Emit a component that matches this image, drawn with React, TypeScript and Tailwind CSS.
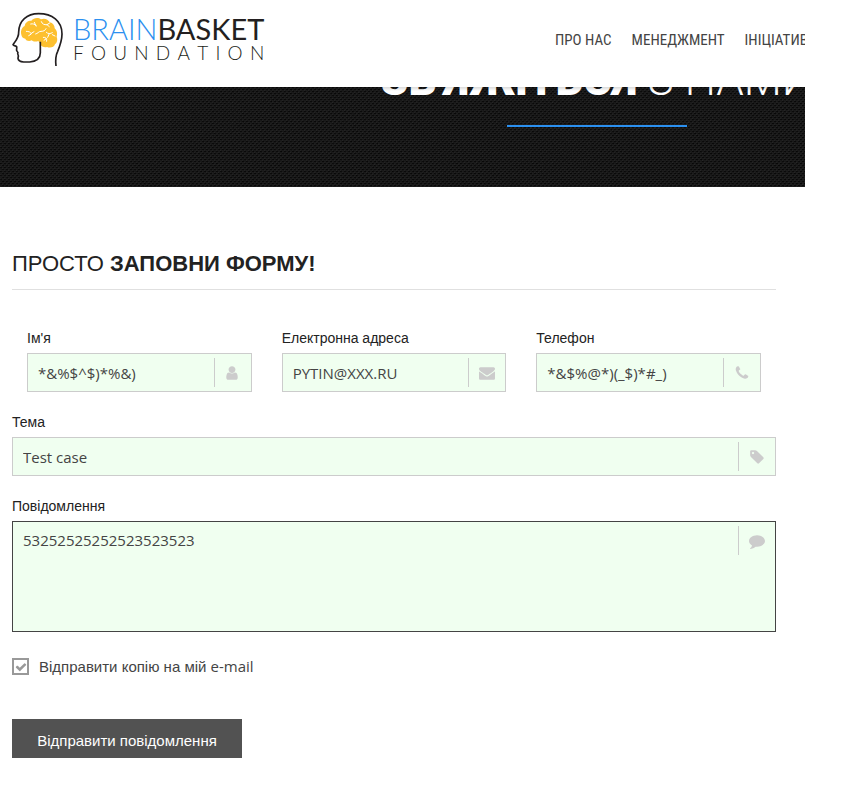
import { useState } from 'react';
import type { ReactNode } from 'react';
import clsx from 'clsx';

const icons = {
  user: 'M1536 1399q0 109-62.5 187t-150.5 78h-854q-88 0-150.5-78t-62.5-187q0-85 8.5-160.5t31.5-152 58.5-131 94-89 134.5-34.5q131 128 313 128t313-128q76 0 134.5 34.5t94 89 58.5 131 31.5 152 8.5 160.5zm-256-887q0 159-112.5 271.5t-271.5 112.5-271.5-112.5-112.5-271.5 112.5-271.5 271.5-112.5 271.5 112.5 112.5 271.5z',
  envelope:
    'M1792 710v794q0 66-47 113t-113 47h-1472q-66 0-113-47t-47-113v-794q44 49 101 87 362 246 497 345 57 42 92.5 65.5t94.5 48 110 24.5h2q51 0 110-24.5t94.5-48 92.5-65.5q170-123 498-345 57-39 100-87zm0-294q0 79-49 151t-122 123q-376 261-468 325-10 7-42.5 31t-54 38.5-52 32.5-57.5 27-50 9h-2q-23 0-50-9t-57.5-27-52-32.5-54-38.5-42.5-31q-91-64-262-182.5t-205-142.5q-62-42-117-115.5t-55-136.5q0-78 41.5-130t118.5-52h1472q65 0 112.5 47t47.5 113z',
  phone:
    'M1600 1240q0 27-10 70.5t-21 68.5q-21 50-122 106-94 51-186 51-27 0-53-3.5t-57.5-12.5-47-14.5-55.5-20.5-49-18q-98-35-175-83-127-79-264-216t-216-264q-48-77-83-175-3-9-18-49t-20.5-55.5-14.5-47-12.5-57.5-3.5-53q0-92 51-186 56-101 106-122 25-11 68.5-21t70.5-10q14 0 21 3 18 6 53 76 11 19 30 54t35 63.5 31 53.5q3 4 17.5 25t21.5 35.5 7 28.5q0 20-28.5 50t-62 55-62 53-28.5 46q0 9 5 22.5t8.5 20.5 14 24 11.5 19q76 137 174 235t235 174q2 1 19 11.5t24 14 20.5 8.5 22.5 5q18 0 46-28.5t53-62 55-62 50-28.5q14 0 28.5 7t35.5 21.5 25 17.5q25 15 53.5 31t63.5 35 54 30q70 35 76 53 3 7 3 21z',
  tag: 'M576 448q0-53-37.5-90.5t-90.5-37.5-90.5 37.5-37.5 90.5 37.5 90.5 90.5 37.5 90.5-37.5 37.5-90.5zm1067 576q0 53-37 90l-491 492q-39 37-91 37-53 0-90-37l-715-716q-38-37-64.5-101t-26.5-117v-416q0-52 38-90t90-38h416q53 0 117 26.5t102 64.5l715 714q37 39 37 91z',
  comment:
    'M1792 896q0 174-120 321.5t-326 233-450 85.5q-70 0-145-8-198 175-460 242-49 14-114 22-17 2-30.5-9t-17.5-29v-1q-3-4-.5-12t2-10 4.5-9.5l6-9 7-8.5 8-9q7-8 31-34.5t34.5-38 31-39.5 32.5-51 27-59 26-76q-157-89-247.5-220t-90.5-281q0-130 71-248.5t191-204.5 286-136.5 348-50.5q244 0 450 85.5t326 233 120 321.5z',
  check:
    'M1671 566q0 40-28 68l-724 724-136 136q-28 28-68 28t-68-28l-136-136-362-362q-28-28-28-68t28-68l136-136q28-28 68-28t68 28l294 295 656-657q28-28 68-28t68 28l136 136q28 28 28 68z',
};

type IconName = keyof typeof icons;

function Icon({ name, className }: { name: IconName; className?: string }) {
  return (
    <svg viewBox="0 0 1792 1792" fill="currentColor" aria-hidden="true" className={className}>
      <path d={icons[name]} />
    </svg>
  );
}

function Logo() {
  return (
    <a href="#home" className="flex w-fit items-start gap-[9px]" aria-label="BrainBasket Foundation">
      <svg viewBox="36 36 156 165" fill="none" className="h-[55px] w-[52px]" aria-hidden="true">
        {/* Brain */}
        <path
          d="M64 104c-3-12 2-22 10-26 1-11 11-17 20-16 7-9 21-10 29-4 10-5 22 0 26 9 10 2 15 9 15 18 7 6 9 16 6 25 4 9 1 18-5 23-3 9-14 12-24 8-8 2-17-1-20-9l-6-9c-8 3-16 2-20-2-8 4-17 1-19-5-7-1-11-6-12-12z"
          fill="#fdc02f"
        />
        <path
          d="M92 72c7-2 13 1 17 5M103 67l5 11M124 65c2 7 9 10 17 9l7 6M141 74l8-5M79 94c7 0 13 2 15 8l-8 5M94 100l8-5M107 102c7-1 8-8 16-8s12-2 15-8M139 97c5 5 12 5 18 1M148 101l-5 11M130 112c7-1 12 4 10 12M132 121l7-5M157 104l8 4"
          stroke="#fff"
          strokeWidth="3"
          strokeLinecap="round"
        />
        {/* Head outline */}
        <path
          d="M168 198c-2-18-2-30 5-44 7-17 13-32 13-52 0-39-30-61-70-61-36 0-59 21-60 55 1 17-9 27-17 38 2 4 9 3 11 6 1 5-1 8 0 12 3 3 6 5 3 9 3 5 3 8 1 14 1 9 8 10 17 11h18c20-2 32-10 32-28v-33"
          stroke="#231f20"
          strokeWidth="5"
          strokeLinejoin="round"
        />
      </svg>
      <span className="flex flex-col pt-[2px] font-['Lato',sans-serif] text-[#231f20]">
        <span className="text-[29px] leading-[29px] font-light text-[#2b90f0]">
          BRAIN<span className="font-normal text-[#231f20]">BASKET</span>
        </span>
        <span className="flex justify-between text-[19px] leading-[20px] font-light">
          {'FOUNDATION'.split('').map((letter, i) => (
            <span key={i}>{letter}</span>
          ))}
        </span>
      </span>
    </a>
  );
}

const navItems = ['Про нас', 'Менеджмент', 'Ініціативи'];

function Header() {
  return (
    <header className="flex h-[87px] overflow-hidden bg-white pt-3 pl-3">
      <div className="w-[543px] shrink-0">
        <Logo />
      </div>
      <nav className="flex gap-5 pt-[18px] font-['Roboto_Condensed','Liberation_Sans_Narrow','Roboto',sans-serif] text-[15px] leading-5 whitespace-nowrap text-[#444] uppercase">
        {navItems.map((item) => (
          <a key={item} href="#nav">
            {item}
          </a>
        ))}
      </nav>
    </header>
  );
}

function Hero() {
  return (
    <section className="relative flex h-[100px] overflow-hidden bg-[#121212]">
      {/* Woven fabric texture */}
      <svg className="absolute inset-0 h-full w-full" aria-hidden="true">
        <defs>
          <pattern id="weave" width="4" height="4" patternUnits="userSpaceOnUse">
            <rect width="4" height="4" fill="#131313" />
            <path d="M0 0h2v1H0zM2 2h2v1H2z" fill="#030303" />
            <path d="M2 1h1v1H2zM0 3h1v1H0z" fill="#1c1c1c" />
          </pattern>
          <filter id="grain">
            <feTurbulence type="fractalNoise" baseFrequency="0.8" numOctaves="2" seed="4" />
            <feColorMatrix type="saturate" values="0" />
          </filter>
        </defs>
        <rect width="100%" height="100%" fill="url(#weave)" />
        <rect width="100%" height="100%" filter="url(#grain)" opacity="0.08" />
      </svg>
      <div className="relative flex w-[1194px] shrink-0 flex-col items-center">
        <h1 className="-mt-[34px] font-['Roboto',sans-serif] text-[44px] leading-[54px] font-light whitespace-nowrap text-white uppercase">
          <strong className="font-black">Зв'яжіться</strong> з нами
        </h1>
        <div className="mt-[18px] h-[2px] w-[180px] bg-[#2b90f0]" />
      </div>
      <div className="absolute inset-x-0 top-0 h-1 bg-linear-to-b from-black/15 to-transparent" />
    </section>
  );
}

interface FieldProps {
  id: string;
  label: string;
  icon: IconName;
  children: ReactNode;
}

function Field({ id, label, icon, children }: FieldProps) {
  return (
    <div>
      <label htmlFor={id} className="mb-[5px] block text-[14px] leading-5 text-[#222]">
        {label}
      </label>
      <div className="relative flex">
        {children}
        <span className="pointer-events-none absolute top-[5px] right-0 flex h-[29px] w-[38px] items-center justify-center border-l border-[#ccc] pr-[2px] text-[#ccc]">
          <Icon name={icon} className="size-4" />
        </span>
      </div>
    </div>
  );
}

const control =
  "w-full min-w-0 resize-none border bg-[#f0fff0] pr-12 pl-[10px] font-['Open_Sans',sans-serif] text-[15px] leading-5 text-[#444] outline-none";

function ContactForm() {
  const [copy, setCopy] = useState(true);

  return (
    <form onSubmit={(e) => e.preventDefault()}>
      <div className="grid grid-cols-3">
        <div className="px-[15px]">
          <Field id="name" label="Ім'я" icon="user">
            <input id="name" defaultValue="*&%$^$)*%&)" className={clsx(control, 'h-[39px] border-[#ccc]')} />
          </Field>
        </div>
        <div className="px-[15px]">
          <Field id="email" label="Електронна адреса" icon="envelope">
            <input id="email" defaultValue="PYTIN@XXX.RU" className={clsx(control, 'h-[39px] border-[#ccc]')} />
          </Field>
        </div>
        <div className="px-[15px]">
          <Field id="phone" label="Телефон" icon="phone">
            <input id="phone" defaultValue="*&$%@*)(_$)*#_)" className={clsx(control, 'h-[39px] border-[#ccc]')} />
          </Field>
        </div>
      </div>
      <div className="mt-5">
        <Field id="subject" label="Тема" icon="tag">
          <input id="subject" defaultValue="Test case" className={clsx(control, 'h-[39px] border-[#ccc]')} />
        </Field>
      </div>
      <div className="mt-5">
        <Field id="message" label="Повідомлення" icon="comment">
          <textarea
            id="message"
            defaultValue="53252525252523523523"
            className={clsx(control, 'h-[111px] border-[#444] pt-2')}
          />
        </Field>
      </div>
      <label className="mt-6 flex w-fit items-center gap-[10px] text-[15px] leading-5 text-[#444]">
        <span className="relative flex">
          <input
            type="checkbox"
            checked={copy}
            onChange={(e) => setCopy(e.target.checked)}
            className="size-[17px] appearance-none border-2 border-[#999] bg-white"
          />
          {copy && (
            <Icon name="check" className="pointer-events-none absolute inset-0 m-auto size-3 text-[#999]" />
          )}
        </span>
        <span>
          Відправити копію на мій <span className="font-['Open_Sans',sans-serif]">e-mail</span>
        </span>
      </label>
      <button
        type="submit"
        className="mt-[42px] h-[39px] w-[230px] bg-[#525252] pt-1 text-[15px] leading-5 text-white"
      >
        Відправити повідомлення
      </button>
    </form>
  );
}

export default function App() {
  return (
    <div className="mr-[37px] bg-white font-['Liberation_Sans',Arial,sans-serif]">
      <Header />
      <Hero />
      <main className="mr-[29px] ml-3 pt-[62px] pb-9">
        <h2 className="mb-[38px] border-b border-[#e0e0e0] pb-[10px] text-[22px] leading-[30px] text-[#222] uppercase">
          Просто <strong className="font-bold">заповни форму!</strong>
        </h2>
        <ContactForm />
      </main>
    </div>
  );
}
